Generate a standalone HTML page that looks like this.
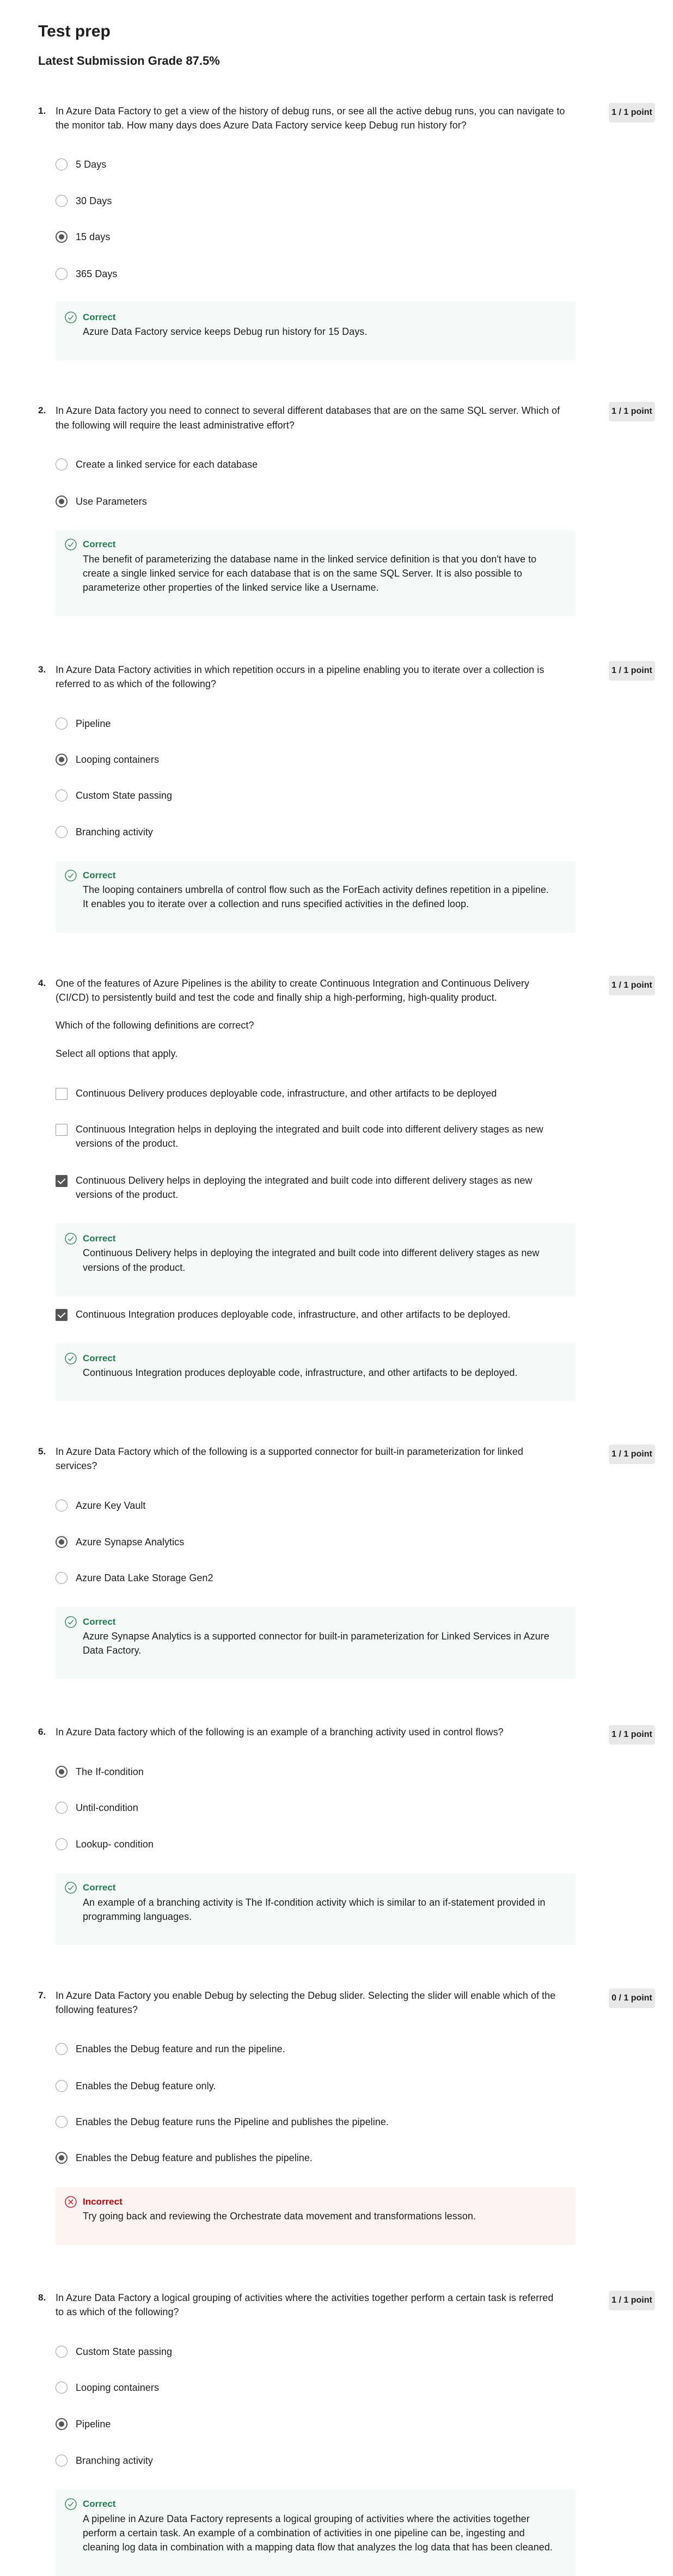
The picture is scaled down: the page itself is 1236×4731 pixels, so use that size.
<!DOCTYPE html>
<html><head><meta charset="utf-8"><style>
body{margin:0;background:#fff;width:1236px;height:4731px;position:relative;overflow:hidden;font-family:"Liberation Sans",Arial,sans-serif;color:#1f1f1f}
.t{position:absolute;font-size:18px;line-height:26px;white-space:nowrap;color:#1f1f1f;letter-spacing:0.05px}
.n{position:absolute;left:70px;font-size:17px;line-height:26px;font-weight:bold}
.r{position:absolute;left:102px;width:22px;height:22px;border:1.5px solid #9a9a9a;border-radius:50%;box-sizing:border-box}
.r.on{border:2px solid #555}
.r.on::after{content:"";position:absolute;left:4px;top:4px;width:10px;height:10px;border-radius:50%;background:#555}
.c{position:absolute;left:102px;width:22px;height:22px;border:1.5px solid #9a9a9a;border-radius:2px;box-sizing:border-box}
.c.on{background:#555;border-color:#555}
.c.on::after{content:"";position:absolute;left:6px;top:2px;width:6px;height:11px;border:solid #fff;border-width:0 2.5px 2.5px 0;transform:rotate(45deg)}
.b{position:absolute;left:1118px;width:85px;height:36px;background:#e8e8e8;border-radius:4px;font-size:16px;font-weight:bold;line-height:36px;text-align:center;color:#1f1f1f}
.box{position:absolute;left:102px;width:955px;background:#f5f9f7}
.box.bad{background:#fdf3f3}
.h{position:absolute;left:152px;font-size:17px;line-height:26px;font-weight:bold;color:#1f7f4f}
.h.bad{color:#d30001}
.ic{position:absolute;left:119px;width:22px;height:22px}
</style></head><body>

<div style="position:absolute;left:70px;top:38px;font-size:30px;line-height:40px;font-weight:bold">Test prep</div>
<div style="position:absolute;left:70px;top:97px;font-size:22px;line-height:30px;font-weight:bold">Latest Submission Grade 87.5%</div>

<!-- Q1 -->
<div class="n" style="top:191px">1.</div>
<div class="t" style="left:102px;top:191px">In Azure Data Factory to get a view of the history of debug runs, or see all the active debug runs, you can navigate to</div>
<div class="t" style="left:102px;top:217px">the monitor tab. How many days does Azure Data Factory service keep Debug run history for?</div>
<div class="b" style="top:189px">1 / 1 point</div>
<div class="r" style="top:291px"></div><div class="t" style="left:139px;top:289px">5 Days</div>
<div class="r" style="top:358px"></div><div class="t" style="left:139px;top:356px">30 Days</div>
<div class="r on" style="top:424px"></div><div class="t" style="left:139px;top:422px">15 days</div>
<div class="r" style="top:492px"></div><div class="t" style="left:139px;top:490px">365 Days</div>
<div class="box" style="top:553px;height:109px"></div>
<svg class="ic" style="top:572px" viewBox="0 0 22 22"><circle cx="11" cy="11" r="10" fill="none" stroke="#1f7f4f" stroke-width="1.3"/><path d="M6.5 11.5l3 3 6-7" fill="none" stroke="#1f7f4f" stroke-width="1.3"/></svg>
<div class="h" style="top:570px">Correct</div>
<div class="t" style="left:152px;top:596px">Azure Data Factory service keeps Debug run history for 15 Days.</div>

<!-- Q2 -->
<div class="n" style="top:741px">2.</div>
<div class="t" style="left:102px;top:741px">In Azure Data factory you need to connect to several different databases that are on the same SQL server. Which of</div>
<div class="t" style="left:102px;top:768px">the following will require the least administrative effort?</div>
<div class="b" style="top:738px">1 / 1 point</div>
<div class="r" style="top:842px"></div><div class="t" style="left:139px;top:840px">Create a linked service for each database</div>
<div class="r on" style="top:910px"></div><div class="t" style="left:139px;top:908px">Use Parameters</div>
<div class="box" style="top:974px;height:158px"></div>
<svg class="ic" style="top:989px" viewBox="0 0 22 22"><circle cx="11" cy="11" r="10" fill="none" stroke="#1f7f4f" stroke-width="1.3"/><path d="M6.5 11.5l3 3 6-7" fill="none" stroke="#1f7f4f" stroke-width="1.3"/></svg>
<div class="h" style="top:987px">Correct</div>
<div class="t" style="left:152px;top:1014px">The benefit of parameterizing the database name in the linked service definition is that you don't have to</div>
<div class="t" style="left:152px;top:1040px">create a single linked service for each database that is on the same SQL Server. It is also possible to</div>
<div class="t" style="left:152px;top:1066px">parameterize other properties of the linked service like a Username.</div>

<!-- Q3 -->
<div class="n" style="top:1217px">3.</div>
<div class="t" style="left:102px;top:1217px">In Azure Data Factory activities in which repetition occurs in a pipeline enabling you to iterate over a collection is</div>
<div class="t" style="left:102px;top:1243px">referred to as which of the following?</div>
<div class="b" style="top:1214px">1 / 1 point</div>
<div class="r" style="top:1318px"></div><div class="t" style="left:139px;top:1316px">Pipeline</div>
<div class="r on" style="top:1384px"></div><div class="t" style="left:139px;top:1382px">Looping containers</div>
<div class="r" style="top:1450px"></div><div class="t" style="left:139px;top:1448px">Custom State passing</div>
<div class="r" style="top:1517px"></div><div class="t" style="left:139px;top:1515px">Branching activity</div>
<div class="box" style="top:1582px;height:131px"></div>
<svg class="ic" style="top:1597px" viewBox="0 0 22 22"><circle cx="11" cy="11" r="10" fill="none" stroke="#1f7f4f" stroke-width="1.3"/><path d="M6.5 11.5l3 3 6-7" fill="none" stroke="#1f7f4f" stroke-width="1.3"/></svg>
<div class="h" style="top:1595px">Correct</div>
<div class="t" style="left:152px;top:1621px">The looping containers umbrella of control flow such as the ForEach activity defines repetition in a pipeline.</div>
<div class="t" style="left:152px;top:1647px">It enables you to iterate over a collection and runs specified activities in the defined loop.</div>

<!-- Q4 -->
<div class="n" style="top:1793px">4.</div>
<div class="t" style="left:102px;top:1793px">One of the features of Azure Pipelines is the ability to create Continuous Integration and Continuous Delivery</div>
<div class="t" style="left:102px;top:1819px">(CI/CD) to persistently build and test the code and finally ship a high-performing, high-quality product.</div>
<div class="t" style="left:102px;top:1870px">Which of the following definitions are correct?</div>
<div class="t" style="left:102px;top:1922px">Select all options that apply.</div>
<div class="b" style="top:1792px">1 / 1 point</div>
<div class="c" style="top:1998px"></div><div class="t" style="left:139px;top:1995px">Continuous Delivery produces deployable code, infrastructure, and other artifacts to be deployed</div>
<div class="c" style="top:2064px"></div><div class="t" style="left:139px;top:2061px">Continuous Integration helps in deploying the integrated and built code into different delivery stages as new</div>
<div class="t" style="left:139px;top:2087px">versions of the product.</div>
<div class="c on" style="top:2158px"></div><div class="t" style="left:139px;top:2155px">Continuous Delivery helps in deploying the integrated and built code into different delivery stages as new</div>
<div class="t" style="left:139px;top:2181px">versions of the product.</div>
<div class="box" style="top:2247px;height:134px"></div>
<svg class="ic" style="top:2264px" viewBox="0 0 22 22"><circle cx="11" cy="11" r="10" fill="none" stroke="#1f7f4f" stroke-width="1.3"/><path d="M6.5 11.5l3 3 6-7" fill="none" stroke="#1f7f4f" stroke-width="1.3"/></svg>
<div class="h" style="top:2262px">Correct</div>
<div class="t" style="left:152px;top:2288px">Continuous Delivery helps in deploying the integrated and built code into different delivery stages as new</div>
<div class="t" style="left:152px;top:2315px">versions of the product.</div>
<div class="c on" style="top:2404px"></div><div class="t" style="left:139px;top:2401px">Continuous Integration produces deployable code, infrastructure, and other artifacts to be deployed.</div>
<div class="box" style="top:2467px;height:106px"></div>
<svg class="ic" style="top:2484px" viewBox="0 0 22 22"><circle cx="11" cy="11" r="10" fill="none" stroke="#1f7f4f" stroke-width="1.3"/><path d="M6.5 11.5l3 3 6-7" fill="none" stroke="#1f7f4f" stroke-width="1.3"/></svg>
<div class="h" style="top:2482px">Correct</div>
<div class="t" style="left:152px;top:2508px">Continuous Integration produces deployable code, infrastructure, and other artifacts to be deployed.</div>

<!-- Q5 -->
<div class="n" style="top:2653px">5.</div>
<div class="t" style="left:102px;top:2653px">In Azure Data Factory which of the following is a supported connector for built-in parameterization for linked</div>
<div class="t" style="left:102px;top:2679px">services?</div>
<div class="b" style="top:2653px">1 / 1 point</div>
<div class="r" style="top:2754px"></div><div class="t" style="left:139px;top:2752px">Azure Key Vault</div>
<div class="r on" style="top:2821px"></div><div class="t" style="left:139px;top:2819px">Azure Synapse Analytics</div>
<div class="r" style="top:2887px"></div><div class="t" style="left:139px;top:2885px">Azure Data Lake Storage Gen2</div>
<div class="box" style="top:2951px;height:133px"></div>
<svg class="ic" style="top:2968px" viewBox="0 0 22 22"><circle cx="11" cy="11" r="10" fill="none" stroke="#1f7f4f" stroke-width="1.3"/><path d="M6.5 11.5l3 3 6-7" fill="none" stroke="#1f7f4f" stroke-width="1.3"/></svg>
<div class="h" style="top:2966px">Correct</div>
<div class="t" style="left:152px;top:2992px">Azure Synapse Analytics is a supported connector for built-in parameterization for Linked Services in Azure</div>
<div class="t" style="left:152px;top:3018px">Data Factory.</div>

<!-- Q6 -->
<div class="n" style="top:3168px">6.</div>
<div class="t" style="left:102px;top:3168px">In Azure Data factory which of the following is an example of a branching activity used in control flows?</div>
<div class="b" style="top:3168px">1 / 1 point</div>
<div class="r on" style="top:3243px"></div><div class="t" style="left:139px;top:3241px">The If-condition</div>
<div class="r" style="top:3309px"></div><div class="t" style="left:139px;top:3307px">Until-condition</div>
<div class="r" style="top:3376px"></div><div class="t" style="left:139px;top:3374px">Lookup- condition</div>
<div class="box" style="top:3440px;height:132px"></div>
<svg class="ic" style="top:3456px" viewBox="0 0 22 22"><circle cx="11" cy="11" r="10" fill="none" stroke="#1f7f4f" stroke-width="1.3"/><path d="M6.5 11.5l3 3 6-7" fill="none" stroke="#1f7f4f" stroke-width="1.3"/></svg>
<div class="h" style="top:3454px">Correct</div>
<div class="t" style="left:152px;top:3481px">An example of a branching activity is The If-condition activity which is similar to an if-statement provided in</div>
<div class="t" style="left:152px;top:3507px">programming languages.</div>

<!-- Q7 -->
<div class="n" style="top:3652px">7.</div>
<div class="t" style="left:102px;top:3652px">In Azure Data Factory you enable Debug by selecting the Debug slider. Selecting the slider will enable which of the</div>
<div class="t" style="left:102px;top:3678px">following features?</div>
<div class="b" style="top:3652px">0 / 1 point</div>
<div class="r" style="top:3752px"></div><div class="t" style="left:139px;top:3750px">Enables the Debug feature and run the pipeline.</div>
<div class="r" style="top:3820px"></div><div class="t" style="left:139px;top:3818px">Enables the Debug feature only.</div>
<div class="r" style="top:3886px"></div><div class="t" style="left:139px;top:3884px">Enables the Debug feature runs the Pipeline and publishes the pipeline.</div>
<div class="r on" style="top:3952px"></div><div class="t" style="left:139px;top:3950px">Enables the Debug feature and publishes the pipeline.</div>
<div class="box bad" style="top:4017px;height:106px"></div>
<svg class="ic" style="top:4033px" viewBox="0 0 22 22"><circle cx="11" cy="11" r="10" fill="none" stroke="#d30001" stroke-width="1.3"/><path d="M7 7l8 8M15 7l-8 8" fill="none" stroke="#d30001" stroke-width="1.3"/></svg>
<div class="h bad" style="top:4031px">Incorrect</div>
<div class="t" style="left:152px;top:4057px">Try going back and reviewing the Orchestrate data movement and transformations lesson.</div>

<!-- Q8 -->
<div class="n" style="top:4207px">8.</div>
<div class="t" style="left:102px;top:4207px">In Azure Data Factory a logical grouping of activities where the activities together perform a certain task is referred</div>
<div class="t" style="left:102px;top:4233px">to as which of the following?</div>
<div class="b" style="top:4207px">1 / 1 point</div>
<div class="r" style="top:4308px"></div><div class="t" style="left:139px;top:4306px">Custom State passing</div>
<div class="r" style="top:4374px"></div><div class="t" style="left:139px;top:4372px">Looping containers</div>
<div class="r on" style="top:4441px"></div><div class="t" style="left:139px;top:4439px">Pipeline</div>
<div class="r" style="top:4508px"></div><div class="t" style="left:139px;top:4506px">Branching activity</div>
<div class="box" style="top:4571px;height:160px"></div>
<svg class="ic" style="top:4588px" viewBox="0 0 22 22"><circle cx="11" cy="11" r="10" fill="none" stroke="#1f7f4f" stroke-width="1.3"/><path d="M6.5 11.5l3 3 6-7" fill="none" stroke="#1f7f4f" stroke-width="1.3"/></svg>
<div class="h" style="top:4586px">Correct</div>
<div class="t" style="left:152px;top:4613px">A pipeline in Azure Data Factory represents a logical grouping of activities where the activities together</div>
<div class="t" style="left:152px;top:4639px">perform a certain task. An example of a combination of activities in one pipeline can be, ingesting and</div>
<div class="t" style="left:152px;top:4665px">cleaning log data in combination with a mapping data flow that analyzes the log data that has been cleaned.</div>

</body></html>
